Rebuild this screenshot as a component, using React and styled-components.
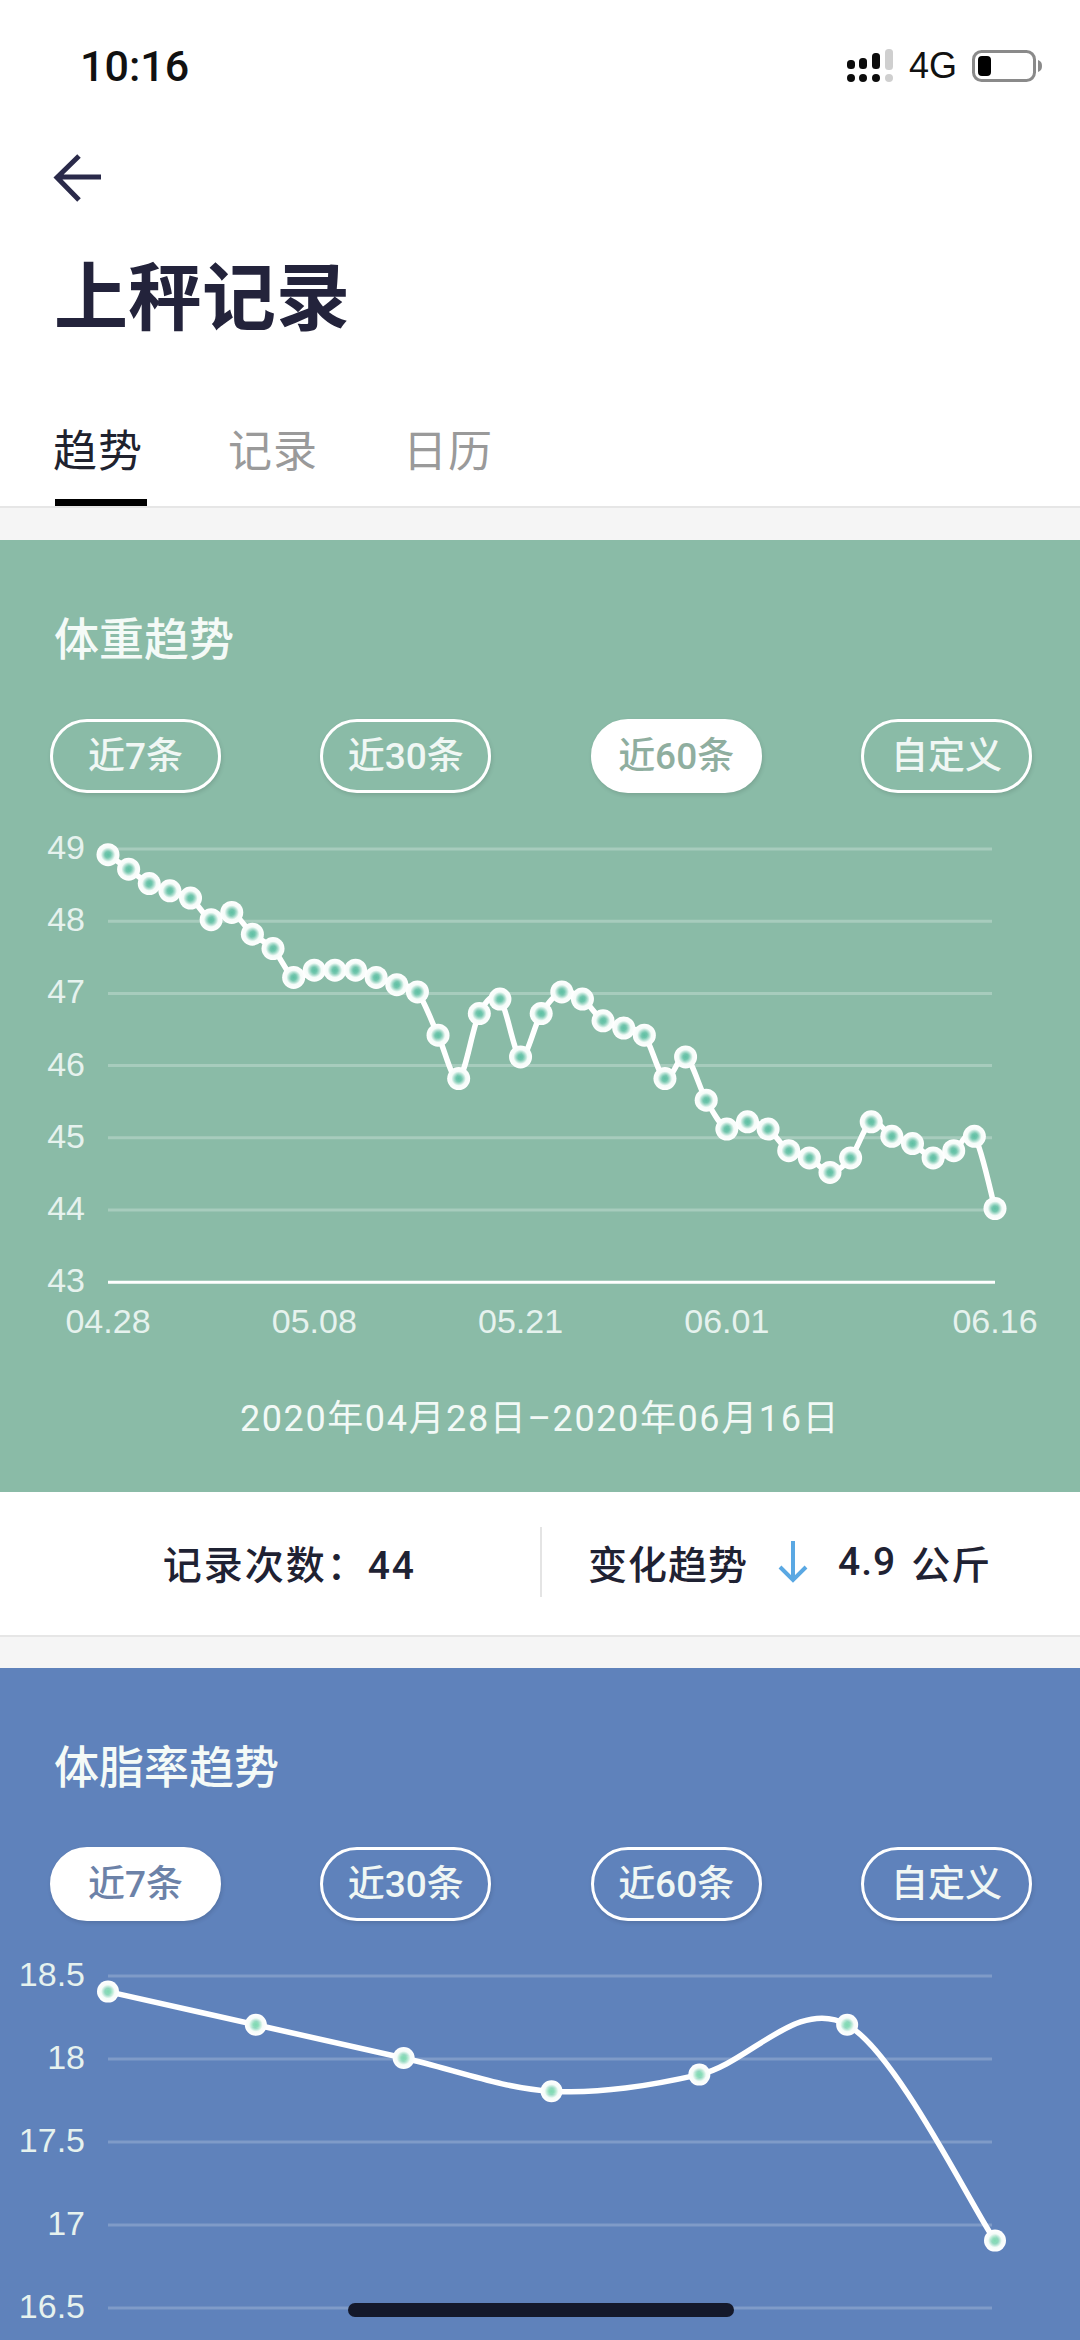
import styled, { createGlobalStyle } from 'styled-components';

const weights = [
  48.9, 48.7, 48.5, 48.4, 48.3, 48.0, 48.1, 47.8, 47.6, 47.2, 47.3,
  47.3, 47.3, 47.2, 47.1, 47.0, 46.4, 45.8, 46.7, 46.9, 46.1, 46.7,
  47.0, 46.9, 46.6, 46.5, 46.4, 45.8, 46.1, 45.5, 45.1, 45.2, 45.1,
  44.8, 44.7, 44.5, 44.7, 45.2, 45.0, 44.9, 44.7, 44.8, 45.0, 44.0,
];
const fats = [18.4, 18.2, 18.0, 17.8, 17.9, 18.2, 16.9];
const ranges = ['近7条', '近30条', '近60条', '自定义'];

const X_START = 108;
const X_END = 995;

// catmull-rom through the points, gives the same overshoot as the app's chart
const smoothPath = (pts) => {
  let d = `M${pts[0].x} ${pts[0].y}`;
  for (let i = 0; i < pts.length - 1; i++) {
    const p0 = pts[Math.max(i - 1, 0)];
    const p1 = pts[i];
    const p2 = pts[i + 1];
    const p3 = pts[Math.min(i + 2, pts.length - 1)];
    const c1x = p1.x + (p2.x - p0.x) / 6;
    const c1y = p1.y + (p2.y - p0.y) / 6;
    const c2x = p2.x - (p3.x - p1.x) / 6;
    const c2y = p2.y - (p3.y - p1.y) / 6;
    d += `C${c1x} ${c1y} ${c2x} ${c2y} ${p2.x} ${p2.y}`;
  }
  return d;
};

const GlobalStyle = createGlobalStyle`
  html, body {
    margin: 0;
    padding: 0;
    background: #f5f5f5;
  }
  * {
    box-sizing: border-box;
  }
`;

const FONT = `"Liberation Sans", "Noto Sans CJK SC", sans-serif`;
const FONT_MEDIUM = `Roboto, "Noto Sans CJK SC", sans-serif`;

const Page = styled.div`
  position: relative;
  width: 1080px;
  height: 2340px;
  overflow: hidden;
  background: #f5f5f5;
  font-family: ${FONT};
`;

const TopPanel = styled.header`
  background: #fff;
  border-bottom: 2px solid #e6e6e6;
  margin-bottom: 32px;
`;

const StatusBar = styled.div`
  display: flex;
  align-items: center;
  justify-content: space-between;
  height: 132px;
  padding: 0 36px 0 80px;
`;

const Time = styled.span`
  font-family: Roboto, sans-serif;
  font-weight: 500;
  font-size: 43px;
  color: #111;
`;

const StatusRight = styled.div`
  display: flex;
  align-items: center;
`;

const NetLabel = styled.span`
  margin: 0 15px 0 14px;
  font-size: 36px;
  color: #111;
`;

const BackIcon = styled.svg`
  display: block;
  margin: 21px 0 0 53px;
`;

const Title = styled.h1`
  margin: 61px 0 0 54px;
  font-size: 74px;
  line-height: 70px;
  font-weight: 700;
  color: #23233b;
`;

const Tabs = styled.nav`
  display: flex;
  gap: 83px;
  margin: 93px 0 0 55px;
`;

const Tab = styled.div`
  width: 92px;
  font-size: 44px;
  line-height: 50px;
  padding-bottom: 22px;
  letter-spacing: 1px;
  text-indent: -2px;
  color: ${({ $active }) => ($active ? '#20222e' : '#9a9a9a')};
  border-bottom: 7px solid ${({ $active }) => ($active ? '#000' : 'transparent')};
`;

const Card = styled.section`
  padding-top: 71px;
  background: ${({ $bg }) => $bg};
`;

const CardTitle = styled.h2`
  margin: 0 0 0 54px;
  font-size: 45px;
  line-height: 60px;
  font-weight: 500;
  color: #f4faf7;
`;

const Pills = styled.div`
  display: flex;
  justify-content: space-between;
  margin-top: 48px;
  padding: 0 48px 0 50px;
`;

const Pill = styled.div`
  display: flex;
  align-items: center;
  justify-content: center;
  width: 171px;
  height: 74px;
  padding-bottom: 6px;
  border-radius: 37px;
  border: 3px solid #fff;
  font-family: ${FONT_MEDIUM};
  font-size: 37px;
  font-weight: 500;
  box-shadow: 1px 2px 4px rgba(0, 0, 0, 0.12);
  color: ${({ $active, $ink }) => ($active ? $ink : '#f0f7f4')};
  background: ${({ $active }) => ($active ? '#fff' : 'transparent')};
`;

const ChartSvg = styled.svg`
  display: block;
`;

const AxisText = styled.text`
  font-family: ${FONT};
  font-size: 34px;
  fill: #e6f2ee;
  dominant-baseline: central;
  text-anchor: ${({ $anchor }) => $anchor};
`;

const DateRange = styled.div`
  margin-top: 33px;
  padding-bottom: 48px;
  text-align: center;
  font-family: ${FONT_MEDIUM};
  font-size: 36px;
  line-height: 50px;
  letter-spacing: 1.6px;
  color: #f2f9f6;
`;

const Stats = styled.div`
  display: flex;
  align-items: center;
  height: 145px;
  padding-bottom: 4px;
  margin-bottom: 31px;
  background: #fff;
  border-bottom: 2px solid #e6e6e6;
  color: #1f2233;
  font-family: ${FONT_MEDIUM};
  font-size: 39px;
  font-weight: 500;
`;

const StatLeft = styled.div`
  width: 540px;
  padding-right: 124px;
  text-align: right;
  letter-spacing: 2px;
`;

const StatDivider = styled.div`
  width: 2px;
  height: 70px;
  background: #e4e4e4;
`;

const StatRight = styled.div`
  display: flex;
  align-items: center;
  padding-left: 46px;
  letter-spacing: 1px;
`;

const StatArrow = styled.svg`
  margin: 0 30px 0 30px;
`;

const StatUnit = styled.span`
  margin-left: 15px;
`;

const HomeBar = styled.div`
  position: absolute;
  left: 348px;
  top: 2303px;
  width: 386px;
  height: 14px;
  border-radius: 7px;
  background: #14192b;
`;

function SignalIcon() {
  const cols = [
    { x: 848, top: 59, h: 9 },
    { x: 860, top: 57, h: 11 },
    { x: 873, top: 52, h: 16 },
    { x: 886, top: 48, h: 21, faint: true },
  ];
  return (
    <svg width="50" height="36" viewBox="846 47 50 36">
      {cols.map((c) => (
        <g key={c.x} fill={c.faint ? '#cfcfcf' : '#0c0c0c'}>
          <rect x={c.x} y={c.top} width="8" height={c.h} rx="3.5" />
          <rect x={c.x} y="73" width="8" height="8" rx="4" />
        </g>
      ))}
    </svg>
  );
}

function BatteryIcon() {
  return (
    <svg width="72" height="32" viewBox="0 0 72 32">
      <rect x="1.5" y="1.5" width="61" height="29" rx="8" fill="#fff" stroke="#8a8a8a" strokeWidth="3" />
      <rect x="6" y="6" width="13" height="20" rx="4" fill="#000" />
      <path d="M66 10c3 1 4 3 4 6s-1 5-4 6z" fill="#8a8a8a" />
    </svg>
  );
}

function Chart({ top, height, ticks, labels, points, dot, gridColor, baseline }) {
  return (
    <ChartSvg width="1080" height={height} viewBox={`0 ${top} 1080 ${height}`}>
      <defs>
        <radialGradient id={dot.id}>
          <stop offset="0%" stopColor={dot.core} />
          <stop offset="22%" stopColor={dot.core} stopOpacity="0.9" />
          <stop offset="62%" stopColor="#f4fbf8" />
          <stop offset="100%" stopColor="#fff" />
        </radialGradient>
      </defs>
      {ticks.map((t, i) => {
        const isBase = baseline && i === ticks.length - 1;
        return (
          <g key={t.label}>
            <line
              x1="108"
              x2={isBase ? X_END : 992}
              y1={t.y}
              y2={t.y}
              stroke={isBase ? '#fff' : gridColor}
              strokeWidth="3"
            />
            <AxisText x="85" y={t.y - 2} $anchor="end">{t.label}</AxisText>
          </g>
        );
      })}
      {labels.map((l) => (
        <AxisText key={l.text} x={l.x} y={l.y} $anchor="middle">{l.text}</AxisText>
      ))}
      <path d={smoothPath(points)} fill="none" stroke="#fff" strokeWidth="5.5" strokeLinecap="round" />
      {points.map((p) => (
        <circle key={`${p.x}-${p.y}`} cx={p.x} cy={p.y} r={dot.r} fill={`url(#${dot.id})`} />
      ))}
    </ChartSvg>
  );
}

const weightTicks = [49, 48, 47, 46, 45, 44, 43].map((v, i) => ({ label: String(v), y: 848 + i * 72.2 }));
const weightPoints = weights.map((v, i) => ({
  x: X_START + (i * (X_END - X_START)) / (weights.length - 1),
  y: 846.5 + (49 - v) * 72.2,
}));
const weightLabels = [
  { text: '04.28', idx: 0 },
  { text: '05.08', idx: 10 },
  { text: '05.21', idx: 20 },
  { text: '06.01', idx: 30 },
  { text: '06.16', idx: 43 },
].map((l) => ({ text: l.text, x: weightPoints[l.idx].x, y: 1320 }));

const fatTicks = ['18.5', '18', '17.5', '17', '16.5'].map((label, i) => ({ label, y: 1975 + i * 83 }));
const fatPoints = fats.map((v, i) => ({
  x: X_START + (i * (X_END - X_START)) / (fats.length - 1),
  y: 2057 + (18 - v) * 166,
}));

function RangePills({ active, ink }) {
  return (
    <Pills>
      {ranges.map((r, i) => (
        <Pill key={r} $active={i === active} $ink={ink}>{r}</Pill>
      ))}
    </Pills>
  );
}

export default function App() {
  return (
    <Page>
      <GlobalStyle />
      <TopPanel>
        <StatusBar>
          <Time>10:16</Time>
          <StatusRight>
            <SignalIcon />
            <NetLabel>4G</NetLabel>
            <BatteryIcon />
          </StatusRight>
        </StatusBar>
        <BackIcon width="50" height="50" viewBox="0 0 50 50" fill="none" stroke="#2a2a4a" strokeWidth="5">
          <path d="M48 24H5M26 3L4 24.5 26 47" />
        </BackIcon>
        <Title>上秤记录</Title>
        <Tabs>
          <Tab $active>趋势</Tab>
          <Tab>记录</Tab>
          <Tab>日历</Tab>
        </Tabs>
      </TopPanel>

      <Card $bg="#8abba7">
        <CardTitle>体重趋势</CardTitle>
        <RangePills active={2} ink="#8fae9f" />
        <Chart
          top={792}
          height={568}
          ticks={weightTicks}
          labels={weightLabels}
          points={weightPoints}
          gridColor="rgba(255, 255, 255, 0.25)"
          baseline
          dot={{ id: 'weightDot', core: '#5fbfa3', r: 11.5 }}
        />
        <DateRange>2020年04月28日–2020年06月16日</DateRange>
      </Card>

      <Stats>
        <StatLeft>记录次数：44</StatLeft>
        <StatDivider />
        <StatRight>
          变化趋势
          <StatArrow width="30" height="42" viewBox="0 0 30 42" fill="none" stroke="#5aa8e3" strokeWidth="4">
            <path d="M15 0V39M2 26L15 39 28 26" />
          </StatArrow>
          4.9
          <StatUnit>公斤</StatUnit>
        </StatRight>
      </Stats>

      <Card $bg="#5f82bb">
        <CardTitle>体脂率趋势</CardTitle>
        <RangePills active={0} ink="#6c82a8" />
        <Chart
          top={1920}
          height={425}
          ticks={fatTicks}
          labels={[]}
          points={fatPoints}
          gridColor="rgba(255, 255, 255, 0.2)"
          dot={{ id: 'fatDot', core: '#7fd8b2', r: 11 }}
        />
      </Card>

      <HomeBar />
    </Page>
  );
}
